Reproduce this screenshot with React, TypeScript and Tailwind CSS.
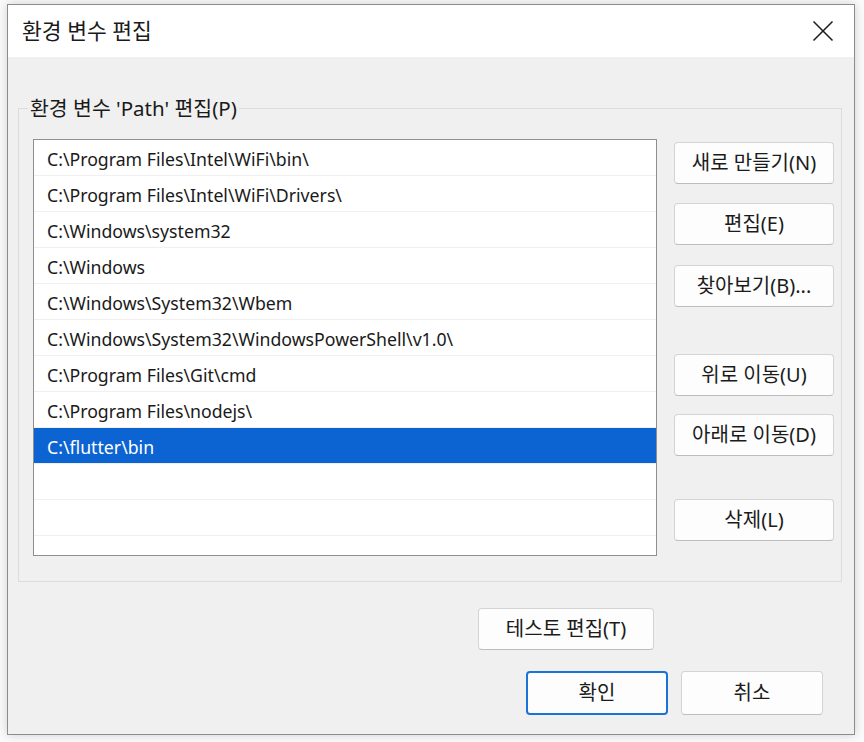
import React, { useState } from 'react';

const paths = [
  'C:\\Program Files\\Intel\\WiFi\\bin\\',
  'C:\\Program Files\\Intel\\WiFi\\Drivers\\',
  'C:\\Windows\\system32',
  'C:\\Windows',
  'C:\\Windows\\System32\\Wbem',
  'C:\\Windows\\System32\\WindowsPowerShell\\v1.0\\',
  'C:\\Program Files\\Git\\cmd',
  'C:\\Program Files\\nodejs\\',
  'C:\\flutter\\bin',
  '',
  '',
];

const font = { fontFamily: '"Noto Sans", "Noto Sans CJK KR", sans-serif' };

function Button({ label, className = '' }: { label: string; className?: string }) {
  return (
    <button
      className={`flex items-center justify-center rounded-[4px] border border-[#d4d4d4] border-b-[#bdbdbd] bg-[#fdfdfd] text-[20px] text-[#1b1b1b] ${className}`}
    >
      {label}
    </button>
  );
}

export default function App() {
  const [selected, setSelected] = useState(8);

  return (
    <div className="h-[742px] w-[864px] bg-[#fbfbfb] pl-[7px] pt-[4px]" style={font}>
      <div className="flex h-[731px] w-[848px] flex-col border border-[#8c8c8c] bg-[#f0f0f0] shadow-[0_0_10px_rgba(0,0,0,0.18)]">
        {/* Title bar */}
        <div className="flex h-[52px] items-center justify-between bg-white pl-[14px] pr-[20px]">
          <span className="text-[21.5px] text-[#1a1a1a]">환경 변수 편집</span>
          <svg width="22" height="22" viewBox="0 0 22 22" fill="none" stroke="#1f1f1f" strokeWidth="1.6">
            <line x1="1.5" y1="1.5" x2="20.5" y2="20.5" />
            <line x1="20.5" y1="1.5" x2="1.5" y2="20.5" />
          </svg>
        </div>

        {/* Body */}
        <div className="flex flex-1 flex-col">
          <fieldset className="ml-[10px] mr-[13px] mt-[38px] border border-[#dcdcdc] pb-[25px] pl-[14px] pr-[7px] pt-[18px]">
            <legend className="-ml-[5px] px-[2px] text-[20.5px] leading-[26px] text-[#1a1a1a]">
              환경 변수 'Path' 편집(P)
            </legend>
            <div className="flex gap-[17px]">
              <div className="h-[417px] w-[624px] overflow-hidden border border-[#8f8f8f] bg-white">
                {paths.map((p, i) => (
                  <div
                    key={i}
                    onClick={() => setSelected(i)}
                    className={`flex h-[36px] items-center border-b border-[#f0f0f0] pl-[13px] pt-[3px] text-[17.7px] ${
                      i === selected ? 'bg-[#0c64d2] text-white' : 'text-[#1a1a1a]'
                    }`}
                  >
                    {p}
                  </div>
                ))}
              </div>
              <div className="flex w-[160px] flex-col">
                <Button label="새로 만들기(N)" className="mt-[3px] h-[42px]" />
                <Button label="편집(E)" className="mt-[19px] h-[42px]" />
                <Button label="찾아보기(B)..." className="mt-[20px] h-[42px]" />
                <Button label="위로 이동(U)" className="mt-[47px] h-[42px]" />
                <Button label="아래로 이동(D)" className="mt-[18px] h-[42px]" />
                <Button label="삭제(L)" className="mt-[43px] h-[42px]" />
              </div>
            </div>
          </fieldset>

          <div className="mt-[26px] flex justify-end pr-[200px]">
            <Button label="테스토 편집(T)" className="h-[42px] w-[176px]" />
          </div>
          <div className="mt-[21px] flex justify-end gap-[13px] pr-[31px]">
            <Button
              label="확인"
              className="h-[44px] w-[142px] !border-2 !border-[#1a73d6]"
            />
            <Button label="취소" className="h-[44px] w-[142px]" />
          </div>
        </div>
      </div>
    </div>
  );
}
